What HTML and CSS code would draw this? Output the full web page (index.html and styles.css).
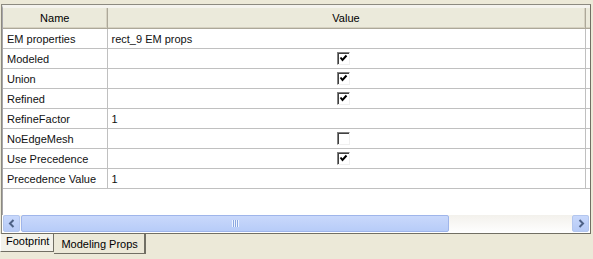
FILE: index.html
```html
<!DOCTYPE html>
<html>
<head>
	<meta charset="UTF-8">
	<title>Propiedades</title>
	<link rel="stylesheet" href="styles.css">
</head>
<body>
	<div class="panel">
		<div class="grid-view">
			<table class="props">
				<colgroup>
					<col class="col-name">
					<col class="col-value">
					<col class="col-extra">
				</colgroup>
				<thead>
					<tr>
						<th>Name</th>
						<th>Value</th>
						<th></th>
					</tr>
				</thead>
				<tbody>
					<tr><td>EM properties</td><td>rect_9 EM props</td><td></td></tr>
					<tr><td>Modeled</td><td class="check"><span class="box"><svg width="9" height="9" viewBox="0 0 9 9"><path d="M1.5 3.5 L3.5 6 L7.5 1.5" fill="none" stroke="#000" stroke-width="2"/></svg></span></td><td></td></tr>
					<tr><td>Union</td><td class="check"><span class="box"><svg width="9" height="9" viewBox="0 0 9 9"><path d="M1.5 3.5 L3.5 6 L7.5 1.5" fill="none" stroke="#000" stroke-width="2"/></svg></span></td><td></td></tr>
					<tr><td>Refined</td><td class="check"><span class="box"><svg width="9" height="9" viewBox="0 0 9 9"><path d="M1.5 3.5 L3.5 6 L7.5 1.5" fill="none" stroke="#000" stroke-width="2"/></svg></span></td><td></td></tr>
					<tr><td>RefineFactor</td><td>1</td><td></td></tr>
					<tr><td>NoEdgeMesh</td><td class="check"><span class="box"></span></td><td></td></tr>
					<tr><td>Use Precedence</td><td class="check"><span class="box"><svg width="9" height="9" viewBox="0 0 9 9"><path d="M1.5 3.5 L3.5 6 L7.5 1.5" fill="none" stroke="#000" stroke-width="2"/></svg></span></td><td></td></tr>
					<tr><td>Precedence Value</td><td>1</td><td></td></tr>
				</tbody>
			</table>
		</div>
		<div class="hscroll">
			<div class="arrow">
				<svg width="8" height="9" viewBox="0 0 8 9"><path d="M5.5 1 L2 4.5 L5.5 8" fill="none" stroke="#4d6185" stroke-width="2"/></svg>
			</div>
			<div class="track">
				<div class="thumb"><span class="grip"></span></div>
			</div>
			<div class="arrow">
				<svg width="8" height="9" viewBox="0 0 8 9"><path d="M2.5 1 L6 4.5 L2.5 8" fill="none" stroke="#4d6185" stroke-width="2"/></svg>
			</div>
		</div>
	</div>
	<div class="tabs">
		<div class="tab active">Footprint</div>
		<div class="tab">Modeling Props</div>
	</div>
</body>
</html>
```

FILE: styles.css
```css
body {
	font-family: 'Liberation Sans', Arial, sans-serif;
	font-size: 11px;
	margin: 0;
	padding: 0;
	background-color: #ece9d8;
	width: 593px;
	height: 259px;
	overflow: hidden;
}

/* Marco de la rejilla */
.panel {
	margin: 4px 2px 0 1px;
	height: 230px;
	border: 1px solid #8c8a80;
	border-right-color: #716f64;
	border-bottom-color: #716f64;
	background-color: #fff;
	display: flex;
	flex-direction: column;
	box-sizing: border-box;
}

.grid-view {
	flex: 1;
	overflow: hidden;
	border-top: 3px solid #f4f3ee;
	border-left: 1px solid #a7a6aa;
}

table.props {
	border-collapse: collapse;
	table-layout: fixed;
	width: 600px;
}

.col-name {
	width: 104px;
}

.col-value {
	width: 478px;
}

.col-extra {
	width: 18px;
}

th {
	height: 20px;
	padding: 0;
	font-weight: normal;
	text-align: center;
	color: #000;
	background-color: #ebeadb;
	border-right: 1px solid #aca899;
	border-bottom: 1px solid #aca899;
	box-shadow: inset -1px -1px 0 #d6d2c2;
}

th:last-child {
	border-left: 1px solid #716f64;
}

td {
	height: 19px;
	padding: 0 0 0 4px;
	border-right: 1px solid #c0c0c0;
	border-bottom: 1px solid #c0c0c0;
	white-space: nowrap;
	color: #111;
}

td:last-child {
	border-right: none;
}

td.check {
	text-align: center;
	padding: 0;
}

/* Casillas de verificacion */
.box {
	display: inline-flex;
	align-items: center;
	justify-content: center;
	width: 11px;
	height: 11px;
	vertical-align: middle;
	border-top: 1px solid #808080;
	border-left: 1px solid #808080;
	border-right: 1px solid #f0f0f0;
	border-bottom: 1px solid #f0f0f0;
	box-shadow: inset 1px 1px 0 #404040;
	margin-top: -2px;
	margin-left: -6px;
}

.box svg {
	display: block;
	margin: 1px 0 0 1px;
}

/* Barra de desplazamiento horizontal */
.hscroll {
	height: 17px;
	display: flex;
	background: linear-gradient(#f3f1ec, #fefefe);
	margin: 0 1px 1px 1px;
}

.arrow {
	width: 17px;
	height: 17px;
	box-sizing: border-box;
	background: linear-gradient(#c8d8fc, #b6caf5);
	border: 1px solid #b3c6ee;
	border-radius: 2px;
	display: flex;
	align-items: center;
	justify-content: center;
}

.track {
	flex: 1;
	padding: 0 1px;
}

.thumb {
	width: 428px;
	height: 17px;
	box-sizing: border-box;
	background: linear-gradient(#c9d8fb, #b7ccf8);
	border: 1px solid #9fb5ea;
	border-radius: 2px;
	display: flex;
	align-items: center;
	justify-content: center;
}

.grip {
	width: 7px;
	height: 7px;
	background: repeating-linear-gradient(90deg, #eef4fe 0 1px, #8ca8e2 1px 2px);
}

/* Pestanas inferiores */
.tabs {
	display: flex;
	align-items: flex-start;
	height: 25px;
}

.tab {
	font-size: 11px;
	white-space: nowrap;
	box-sizing: border-box;
	border-bottom: 1px solid #716f64;
}

.tab.active {
	height: 18px;
	line-height: 15px;
	padding: 0 4px 0 5px;
	border-left: 1px solid #fff;
	border-right: 1px solid #716f64;
	background-color: #f3f2ea;
}

.tab:not(.active) {
	height: 20px;
	line-height: 21px;
	padding: 0 6px 0 7px;
	border-right: 2px solid #716f64;
}
```
